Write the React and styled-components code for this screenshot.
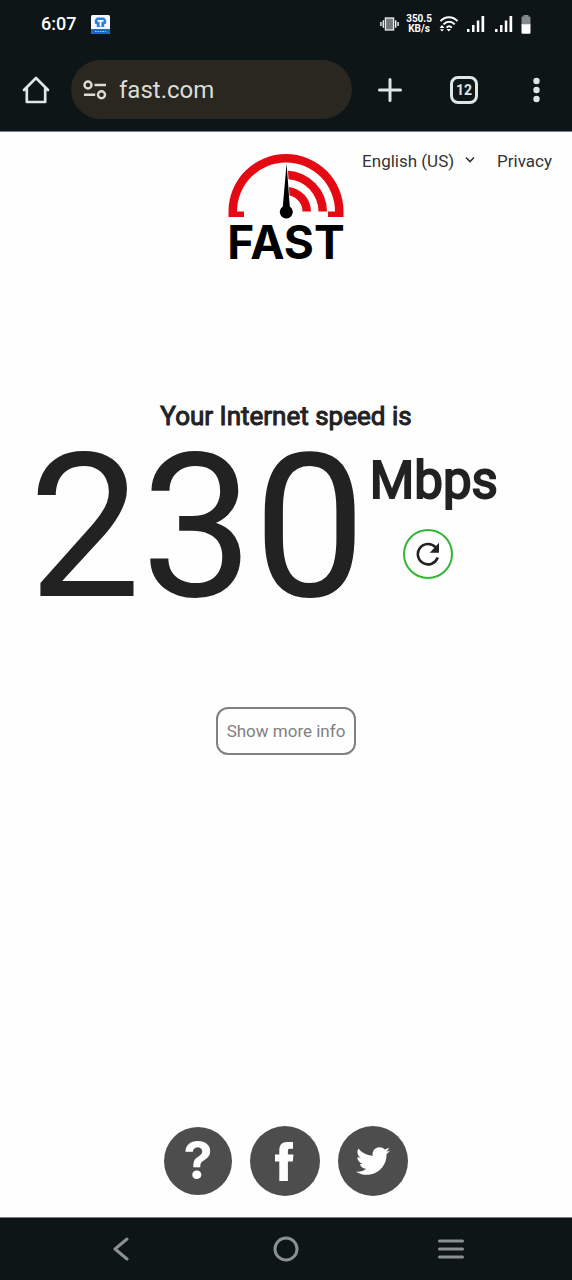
import React from "react";
import styled, { createGlobalStyle } from "styled-components";
import { FaTwitter } from "react-icons/fa";

const GlobalStyle = createGlobalStyle`
  *, *::before, *::after { box-sizing: border-box; }
  body { margin: 0; background: #fefefe; font-family: Roboto, "Noto Sans", sans-serif; }
  button, input, select { font: inherit; color: inherit; margin: 0; padding: 0; border: 0; background: none; }
  button { cursor: pointer; }
  svg { display: block; }
`;

const Screen = styled.div`
  display: flex;
  flex-direction: column;
  min-height: 100vh;
  color: #222;
`;

const BrowserChrome = styled.header`
  background: #0d1517;
  color: #dde5e6;
  border-bottom: 1px solid #7b8182;
`;

const StatusBar = styled.div`
  display: flex;
  align-items: center;
  justify-content: space-between;
  height: 48px;
  padding: 0 41px;
  color: #fff;
`;

const StatusGroup = styled.div`
  display: flex;
  align-items: center;
  gap: ${(p) => p.$gap}px;
`;

const Clock = styled.time`
  font-size: 18px;
  font-weight: 500;
  line-height: 24px;
`;

const NetSpeed = styled.div`
  font-size: 10px;
  font-weight: 700;
  line-height: 10px;
  text-align: center;
`;

const Toolbar = styled.div`
  display: flex;
  align-items: center;
  padding: 12px 24px 12px 22px;
`;

const ToolButton = styled.button`
  display: flex;
  align-items: center;
  justify-content: center;
  width: ${(p) => p.$width || 28}px;
  height: 28px;
`;

const AddressBar = styled.label`
  display: flex;
  flex: 1;
  min-width: 0;
  align-items: center;
  gap: 12px;
  height: 59px;
  margin: 0 24px 0 21px;
  padding: 0 12px;
  border-radius: 30px;
  background: #29271f;
`;

const AddressInput = styled.input`
  flex: 1;
  min-width: 0;
  font-size: 24px;
  line-height: 32px;
  color: #dcdcd6;
  outline: none;
`;

const Actions = styled.div`
  display: flex;
  align-items: center;
  gap: 46px;
`;

const TabsButton = styled(ToolButton)`
  border: 3px solid #dde5e6;
  border-radius: 8px;
  font-size: 14px;
  font-weight: 700;
  line-height: 20px;
`;

const Page = styled.main`
  display: flex;
  flex: 1;
  flex-direction: column;
  padding-bottom: 21px;
`;

const SiteHeader = styled.div`
  display: grid;
  grid-template-columns: 1fr auto 1fr;
  align-items: start;
  padding: 22px 20px 0;
`;

const Logo = styled.a`
  grid-column: 2;
  display: flex;
  flex-direction: column;
  align-items: center;
  width: 116px;
  color: #000;
  text-decoration: none;
`;

const LogoWord = styled.span`
  font-family: Inter, sans-serif;
  font-size: 46px;
  font-weight: 700;
  line-height: 46px;
`;

const SiteLinks = styled.nav`
  display: flex;
  justify-content: flex-end;
  gap: 21px;
  margin-top: -3px;
  font-size: 17px;
  line-height: 20px;
  white-space: nowrap;
  color: #333;
`;

const LanguagePicker = styled.label`
  display: flex;
  position: relative;
`;

const LanguageSelect = styled.select`
  appearance: none;
  padding-right: 21px;
  line-height: 20px;
`;

const Chevron = styled.svg`
  position: absolute;
  right: 0;
  top: 5px;
  pointer-events: none;
`;

const TextLink = styled.a`
  color: inherit;
  text-decoration: none;
`;

const Result = styled.section`
  display: flex;
  flex-direction: column;
  align-items: center;
  margin-top: 135px;
`;

const ResultTitle = styled.h1`
  margin: 0;
  font-size: 26px;
  font-weight: 400;
  line-height: 32px;
  -webkit-text-stroke: 1px currentColor;
`;

const SpeedRow = styled.div`
  display: flex;
  align-self: stretch;
  gap: 4px;
  padding-left: 5%;
`;

const SpeedValue = styled.div`
  font-size: 200px;
  line-height: 192px;
`;

const SpeedSide = styled.div`
  padding-top: 19px;
`;

const SpeedUnit = styled.div`
  font-size: 51px;
  font-weight: 400;
  line-height: 60px;
  -webkit-text-stroke: 2px currentColor;
`;

const RetestButton = styled.button`
  display: flex;
  align-items: center;
  justify-content: center;
  width: 50px;
  height: 50px;
  margin: 18px 0 0 33px;
  border: 2px solid #35b43a;
  border-radius: 50%;
  background: #fff;
`;

const MoreButton = styled.button`
  height: 48px;
  margin-top: 83px;
  padding: 0 9px;
  border: 2px solid #808080;
  border-radius: 12px;
  font-size: 17px;
  line-height: 20px;
  color: #808080;
`;

const SocialBar = styled.footer`
  display: flex;
  align-items: center;
  justify-content: center;
  gap: 18px;
  margin-top: auto;
`;

const RoundLink = styled.a`
  display: flex;
  align-items: center;
  justify-content: center;
  width: ${(p) => p.$size}px;
  height: ${(p) => p.$size}px;
  border-radius: 50%;
  background: #4d4d4d;
  color: #fff;
  font-family: Inter, sans-serif;
  font-size: 52px;
  font-weight: 700;
  line-height: 60px;
  text-decoration: none;
`;

const SystemNav = styled.nav`
  display: grid;
  grid-template-columns: repeat(3, 1fr);
  justify-items: center;
  align-items: center;
  height: 63px;
  padding: 0 38px;
  border-top: 1px solid #7b8182;
  background: #0d1517;
  color: #8b9092;
`;

const AppBadge = () => (
  <svg width="19" height="19" viewBox="0 0 19 19" aria-hidden="true">
    <rect width="19" height="19" rx="1.500" fill="#f4f9ff" />
    <path d="M0 14h19v3.500a1.500 1.500 0 0 1-1.500 1.500h-16A1.500 1.500 0 0 1 0 17.500z" fill="#1a66d0" />
    <path d="M4 16.500h11" stroke="#a9cbf5" strokeWidth="1" strokeDasharray="1.500 1" />
    <path d="M6 2.500h7l2.200 2.500v3.500l-2 .8v2.700H5.800V9.300l-2-.8V5z" fill="#2383e2" />
    <path d="M6.500 5.800h6M9.500 5.800v5.700" stroke="#fff" strokeWidth="1.800" />
  </svg>
);

const VibrateIcon = () => (
  <svg width="19" height="16" viewBox="0 0 20 16" fill="none" stroke="#e8ecec" aria-hidden="true">
    <rect x="5.700" y="1.700" width="8.600" height="12.600" fill="#747a7c" strokeWidth="1.400" />
    <path d="M3.500 4v8M16.500 4v8M1 6v4M19 6v4" strokeWidth="1.600" />
  </svg>
);

const WifiIcon = () => (
  <svg width="20" height="16" viewBox="0 0 20 16" fill="none" stroke="#fff" strokeWidth="2" aria-hidden="true">
    <path d="M1.500 5.200C6-0.200 14-0.200 18.500 5.200" />
    <path d="M4.500 8.400c3.200-3.700 8-3.700 11.200 0" />
    <path d="M7.500 11.600c1.600-1.700 3.700-1.700 5.300 0" />
    <path d="M3 9l2.500 3h-5zM3 15.500l-2-2.200h4zM9.800 15.500L7.600 13H12z" fill="#fff" stroke="none" />
  </svg>
);

const SignalIcon = () => (
  <svg width="18" height="16" viewBox="0 0 18 16" fill="#fff" aria-hidden="true">
    <rect x="0" y="13" width="2.500" height="3" />
    <rect x="5" y="9" width="2.500" height="7" />
    <rect x="9.800" y="4.500" width="2.500" height="11.500" />
    <rect x="14.500" y="0" width="2.700" height="16" />
  </svg>
);

const BatteryIcon = () => (
  <svg width="10" height="19" viewBox="0 0 10 19" aria-hidden="true">
    <path d="M2.500 0h5v1.500H9l.5.500v8H.5V2l.5-.5h1.500z" fill="#85898a" />
    <path d="M.5 9.300h9V18l-.7.700H1.200L.5 18z" fill="#fff" />
  </svg>
);

const HomeIcon = () => (
  <svg width="28" height="28" viewBox="0 0 28 28" fill="none" stroke="currentColor" strokeWidth="2.700" strokeLinejoin="round" strokeLinecap="round" aria-hidden="true">
    <path d="M2 14L14 2l12 12M4.800 12.500V26h18.400V12.500" />
  </svg>
);

const SiteInfoIcon = () => (
  <svg width="24" height="20" viewBox="0 0 24 20" fill="none" stroke="#dcdcd6" strokeWidth="2.400" aria-hidden="true">
    <circle cx="5" cy="5" r="3.500" />
    <circle cx="18.500" cy="14.800" r="3.500" />
    <path d="M11.500 5H23M1 14.800h11.200" />
  </svg>
);

const PlusIcon = () => (
  <svg width="24" height="24" viewBox="0 0 24 24" fill="none" stroke="currentColor" strokeWidth="3" strokeLinecap="round" aria-hidden="true">
    <path d="M12 1.500v21M1.500 12h21" />
  </svg>
);

const DotsIcon = () => (
  <svg width="8" height="26" viewBox="0 0 8 26" fill="currentColor" aria-hidden="true">
    <circle cx="4.500" cy="4" r="3.200" />
    <circle cx="4.500" cy="13" r="3.200" />
    <circle cx="4.500" cy="22" r="3.200" />
  </svg>
);

const Gauge = () => (
  <svg width="116" height="65" viewBox="0 0 116 65" aria-hidden="true">
    <g fill="#e50914">
      <path d="M.5 63V57.500a57.500 57.500 0 0 1 115 0V63H100v-5.500h7A49 49 0 0 0 9 57.500h7V63z" />
      <path d="M60 16.800A41 41 0 0 1 99 57.500h-8.500A32.500 32.500 0 0 0 60.500 25.200z" />
      <path d="M61 33A25 25 0 0 1 83 57.500h-8.500A16.500 16.500 0 0 0 61.500 41.500z" />
    </g>
    <path d="M58.600 9.500L61.800 52.500a6.500 6.500 0 1 1-7 0z" fill="#000" />
  </svg>
);

const RetestIcon = () => (
  <svg width="24" height="24" viewBox="0 0 24 24" aria-hidden="true">
    <path d="M21.700 15.500A10.200 10.200 0 1 1 19.500 5.200" fill="none" stroke="#222" strokeWidth="2.600" />
    <path d="M23 .8V10.800H13.800z" fill="#222" />
  </svg>
);

const FacebookIcon = () => (
  <svg width="70" height="70" viewBox="0 0 70 70" fill="currentColor" aria-hidden="true">
    <path d="M29.300 55V35.500H25V28.500h4.300V24.500C29.300 18.800 32 16 37.300 16H43v6.800h-3.200c-1.500 0-1.900.7-1.900 2.200v3.500h5.600l-.7 7h-4.900V55z" />
  </svg>
);

const BackIcon = () => (
  <svg width="16" height="24" viewBox="0 0 16 24" fill="none" stroke="currentColor" strokeWidth="3" strokeLinecap="round" strokeLinejoin="round" aria-hidden="true">
    <path d="M14 2L2 12l12 10" />
  </svg>
);

const CircleIcon = () => (
  <svg width="26" height="26" viewBox="0 0 26 26" fill="none" stroke="currentColor" strokeWidth="3" aria-hidden="true">
    <circle cx="13" cy="13" r="11" />
  </svg>
);

const RecentsIcon = () => (
  <svg width="26" height="20" viewBox="0 0 26 20" fill="none" stroke="currentColor" strokeWidth="3" strokeLinecap="round" aria-hidden="true">
    <path d="M1.500 2h23M1.500 10h23M1.500 18h23" />
  </svg>
);

export default function App() {
  return (
    <Screen>
      <GlobalStyle />
      <BrowserChrome>
        <StatusBar>
          <StatusGroup $gap={15}>
            <Clock>6:07</Clock>
            <AppBadge />
          </StatusGroup>
          <StatusGroup $gap={8}>
            <StatusGroup $gap={7}>
              <VibrateIcon />
              <NetSpeed>
                350.5
                <br />
                KB/s
              </NetSpeed>
              <WifiIcon />
            </StatusGroup>
            <StatusGroup $gap={10}>
              <SignalIcon />
              <SignalIcon />
            </StatusGroup>
            <BatteryIcon />
          </StatusGroup>
        </StatusBar>
        <Toolbar>
          <ToolButton aria-label="Home">
            <HomeIcon />
          </ToolButton>
          <AddressBar>
            <SiteInfoIcon />
            <AddressInput aria-label="Address" defaultValue="fast.com" />
          </AddressBar>
          <Actions>
            <ToolButton aria-label="New tab">
              <PlusIcon />
            </ToolButton>
            <TabsButton aria-label="12 open tabs">12</TabsButton>
            <ToolButton $width={24} aria-label="Menu">
              <DotsIcon />
            </ToolButton>
          </Actions>
        </Toolbar>
      </BrowserChrome>

      <Page>
        <SiteHeader>
          <Logo href="#home">
            <Gauge />
            <LogoWord>FAST</LogoWord>
          </Logo>
          <SiteLinks>
            <LanguagePicker>
              <LanguageSelect aria-label="Language">
                <option>English (US)</option>
              </LanguageSelect>
              <Chevron width="12" height="8" viewBox="0 0 12 8" fill="none" stroke="#333" strokeWidth="1.600">
                <path d="M2 1.500l4 4 4-4" />
              </Chevron>
            </LanguagePicker>
            <TextLink href="#privacy">Privacy</TextLink>
          </SiteLinks>
        </SiteHeader>

        <Result>
          <ResultTitle>Your Internet speed is</ResultTitle>
          <SpeedRow>
            <SpeedValue>230</SpeedValue>
            <SpeedSide>
              <SpeedUnit>Mbps</SpeedUnit>
              <RetestButton aria-label="Test again">
                <RetestIcon />
              </RetestButton>
            </SpeedSide>
          </SpeedRow>
          <MoreButton>Show more info</MoreButton>
        </Result>

        <SocialBar>
          <RoundLink $size={68} href="#help" aria-label="Help">?</RoundLink>
          <RoundLink $size={70} href="#facebook" aria-label="Facebook">
            <FacebookIcon />
          </RoundLink>
          <RoundLink $size={70} href="#twitter" aria-label="Twitter">
            <FaTwitter size={34} />
          </RoundLink>
        </SocialBar>
      </Page>

      <SystemNav aria-label="System">
        <ToolButton aria-label="Back">
          <BackIcon />
        </ToolButton>
        <ToolButton aria-label="Home screen">
          <CircleIcon />
        </ToolButton>
        <ToolButton aria-label="Recent apps">
          <RecentsIcon />
        </ToolButton>
      </SystemNav>
    </Screen>
  );
}
